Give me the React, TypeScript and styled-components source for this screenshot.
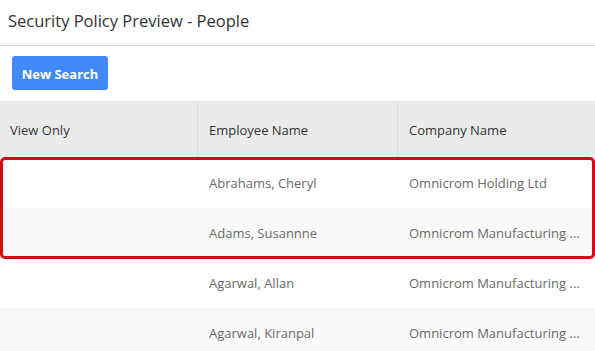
import React from 'react';
import styled, {createGlobalStyle} from 'styled-components';

const GlobalStyle = createGlobalStyle`
	html, body {
		margin: 0;
		padding: 0;
		background: #ffffff;
		font-family: 'Open Sans', 'Noto Sans', sans-serif;
	}
`;

const Page = styled.div`
	width: 595px;
	height: 351px;
	overflow: hidden;
	background: #ffffff;
`;

const TitleBar = styled.div`
	height: 46px;
	box-sizing: border-box;
	padding: 0 0 5px 8px;
	display: flex;
	align-items: center;
	border-bottom: 1px solid #dcdcdc;
	font-size: 16.5px;
	color: #333333;
`;

const Toolbar = styled.div`
	padding: 10px 12px 11px;
	display: flex;
`;

const PrimaryButton = styled.button`
	width: 96px;
	height: 34px;
	border: none;
	border-radius: 3px;
	background: #4189f7;
	color: #ffffff;
	font-family: inherit;
	font-weight: 700;
	font-size: 13px;
	padding: 2px 0 0;
	cursor: pointer;
`;

const Table = styled.div`
	display: flex;
	flex-direction: column;
`;

const Row = styled.div<{$header?: boolean; $striped?: boolean}>`
	display: grid;
	grid-template-columns: 197px 200px 198px;
	height: ${p => (p.$header ? 57 : 50)}px;
	background: ${p => (p.$header ? '#ebebeb' : p.$striped ? '#f9f9f9' : '#ffffff')};
	color: ${p => (p.$header ? '#333333' : '#6a6a6a')};
	font-size: 13px;
`;

const Cell = styled.div<{$first?: boolean; $divider?: boolean}>`
	display: flex;
	align-items: center;
	padding: ${p => (p.$first ? '0 0 0 9px' : '0 12px 0 11px')};
	border-left: 1px solid ${p => (p.$divider ? '#dcdcdc' : 'transparent')};
	min-width: 0;
	overflow: hidden;
`;

const CellText = styled.span`
	white-space: nowrap;
	overflow: hidden;
	text-overflow: ellipsis;
`;

const Highlight = styled.div`
	position: relative;

	&::after {
		content: '';
		position: absolute;
		top: -1px;
		bottom: -1px;
		left: 0;
		right: 0;
		border: 3px solid #d30b17;
		border-radius: 5px;
		pointer-events: none;
	}
`;

type Person = {name: string; company: string};

// company names are shown as the grid truncates them
const people: Person[] = [
	{name: 'Abrahams, Cheryl', company: 'Omnicrom Holding Ltd'},
	{name: 'Adams, Susannne', company: 'Omnicrom Manufacturing ...'},
	{name: 'Agarwal, Allan', company: 'Omnicrom Manufacturing ...'},
	{name: 'Agarwal, Kiranpal', company: 'Omnicrom Manufacturing ...'},
];

const PersonRow = ({person, index}: {person: Person; index: number}) => (
	<Row $striped={index % 2 === 1}>
		<Cell $first />
		<Cell>
			<CellText>{person.name}</CellText>
		</Cell>
		<Cell>
			<CellText>{person.company}</CellText>
		</Cell>
	</Row>
);

const App = () => (
	<Page>
		<GlobalStyle />
		<TitleBar>Security Policy Preview - People</TitleBar>
		<Toolbar>
			<PrimaryButton>New Search</PrimaryButton>
		</Toolbar>
		<Table>
			<Row $header>
				<Cell $first>View Only</Cell>
				<Cell $divider>Employee Name</Cell>
				<Cell $divider>Company Name</Cell>
			</Row>
			<Highlight>
				{people.slice(0, 2).map((p, i) => (
					<PersonRow key={p.name} person={p} index={i} />
				))}
			</Highlight>
			{people.slice(2).map((p, i) => (
				<PersonRow key={p.name} person={p} index={i + 2} />
			))}
		</Table>
	</Page>
);

export default App;
